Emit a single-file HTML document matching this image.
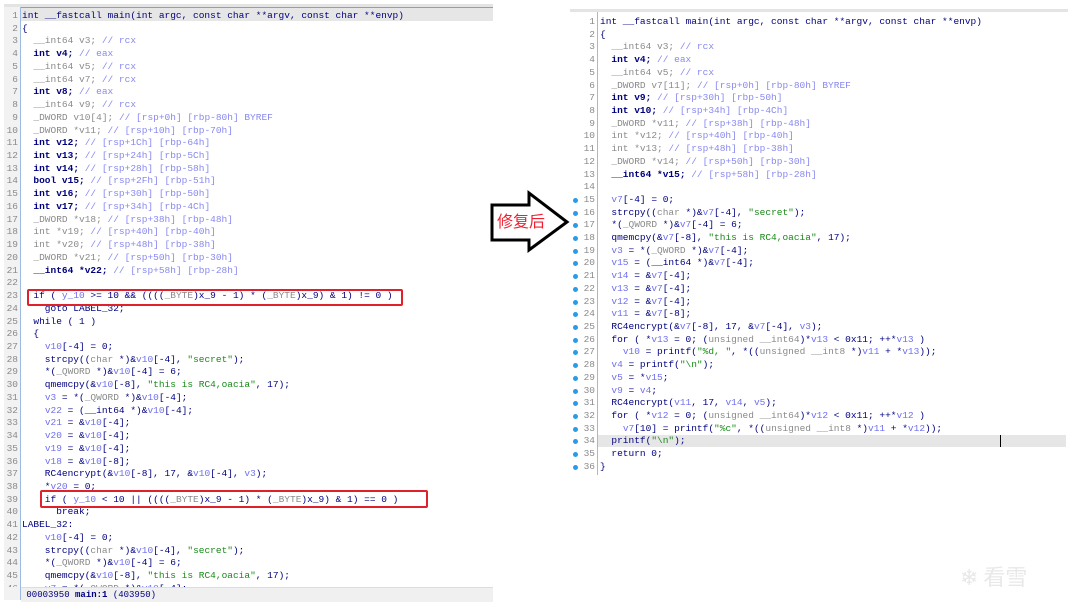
<!DOCTYPE html>
<html><head><meta charset="utf-8"><style>
body{margin:0;width:1080px;height:607px;background:#fff;position:relative;overflow:hidden;font-family:"Liberation Mono",monospace;}
.p{position:absolute;font-size:9.5px;color:#00007f;white-space:pre;}
.l{position:absolute;height:12.7px;line-height:12.7px;}
.n{position:absolute;text-align:right;color:#8a8a8a;height:12.7px;line-height:12.7px;}
.v{color:#6f6fef}.c{color:#8888f0}.g{color:#8a8a8a}.s{color:#1a8a1a}
.dot{position:absolute;width:5px;height:5px;border-radius:50%;background:#2a9be8;}
</style></head><body>

<!-- left panel -->
<div style="position:absolute;left:4px;top:4px;width:489px;height:3px;background:#e4e4e4"></div>
<div style="position:absolute;left:21px;top:7px;width:472px;height:1px;background:#6fa8e0"></div>
<div style="position:absolute;left:21px;top:8px;width:472px;height:13px;background:#e6e6e6"></div>
<div style="position:absolute;left:4px;top:7px;width:16px;height:593px;background:#f2f2f2;border-right:1px solid #9bbce0"></div>
<div class="p" id="L" style="left:0;top:10px;width:493px;height:577px;overflow:hidden">
</div>
<div style="position:absolute;left:21px;top:587px;width:472px;height:14px;background:#f0f0f0;border-top:1px solid #ddd;font-family:'Liberation Mono',monospace;font-size:9px;line-height:14px;color:#00007f;white-space:pre"> 00003950 <b>main:1</b> (403950)</div>
<div style="position:absolute;left:27px;top:289px;width:372px;height:13px;border:2px solid #e0202a;border-radius:2px"></div>
<div style="position:absolute;left:40px;top:490px;width:384px;height:14px;border:2px solid #e0202a;border-radius:2px"></div>

<!-- arrow -->
<svg style="position:absolute;left:480px;top:180px" width="100" height="80">
<path d="M12 25 H49 V13 L87 42 L49 70 V60 H12 Z" fill="#fff" stroke="#000" stroke-width="3" stroke-linejoin="miter"/>
</svg>
<div style="position:absolute;left:497px;top:211px;font-family:'Noto Sans CJK SC',sans-serif;font-size:16px;line-height:18px;color:#f02030;">修复后</div>

<!-- right panel -->
<div style="position:absolute;left:570px;top:9px;width:498px;height:3px;background:#e4e4e4"></div>
<div style="position:absolute;left:570px;top:12px;width:27px;height:463px;background:#fff;border-right:1px solid #9bbce0"></div>
<div style="position:absolute;left:598px;top:435px;width:468px;height:12px;background:#e6e6e6"></div>
<div style="position:absolute;left:1000px;top:435px;width:1px;height:12px;background:#000"></div>
<div class="p" id="R" style="left:570px;top:16px;width:498px;height:460px"></div>

<div style="position:absolute;left:960px;top:560px;font-family:'Noto Sans CJK SC',sans-serif;font-size:22px;color:#e8e8e8">❄ 看雪</div>

<script>
var L=[
'int __fastcall main(int argc, const char **argv, const char **envp)',
'{',
'  <span class="g">__int64 v3;</span> <span class="c">// rcx</span>',
'  <b>int v4;</b> <span class="c">// eax</span>',
'  <span class="g">__int64 v5;</span> <span class="c">// rcx</span>',
'  <span class="g">__int64 v7;</span> <span class="c">// rcx</span>',
'  <b>int v8;</b> <span class="c">// eax</span>',
'  <span class="g">__int64 v9;</span> <span class="c">// rcx</span>',
'  <span class="g">_DWORD v10[4];</span> <span class="c">// [rsp+0h] [rbp-80h] BYREF</span>',
'  <span class="g">_DWORD *v11;</span> <span class="c">// [rsp+10h] [rbp-70h]</span>',
'  <b>int v12;</b> <span class="c">// [rsp+1Ch] [rbp-64h]</span>',
'  <b>int v13;</b> <span class="c">// [rsp+24h] [rbp-5Ch]</span>',
'  <b>int v14;</b> <span class="c">// [rsp+28h] [rbp-58h]</span>',
'  <b>bool v15;</b> <span class="c">// [rsp+2Fh] [rbp-51h]</span>',
'  <b>int v16;</b> <span class="c">// [rsp+30h] [rbp-50h]</span>',
'  <b>int v17;</b> <span class="c">// [rsp+34h] [rbp-4Ch]</span>',
'  <span class="g">_DWORD *v18;</span> <span class="c">// [rsp+38h] [rbp-48h]</span>',
'  <span class="g">int *v19;</span> <span class="c">// [rsp+40h] [rbp-40h]</span>',
'  <span class="g">int *v20;</span> <span class="c">// [rsp+48h] [rbp-38h]</span>',
'  <span class="g">_DWORD *v21;</span> <span class="c">// [rsp+50h] [rbp-30h]</span>',
'  <b>__int64 *v22;</b> <span class="c">// [rsp+58h] [rbp-28h]</span>',
'',
'  if ( <span class="v">y_10</span> &gt;= 10 &amp;&amp; ((((<span class="g">_BYTE</span>)x_9 - 1) * (<span class="g">_BYTE</span>)x_9) &amp; 1) != 0 )',
'    goto LABEL_32;',
'  while ( 1 )',
'  {',
'    <span class="v">v10</span>[-4] = 0;',
'    strcpy((<span class="g">char</span> *)&amp;<span class="v">v10</span>[-4], <span class="s">"secret"</span>);',
'    *(<span class="g">_QWORD</span> *)&amp;<span class="v">v10</span>[-4] = 6;',
'    qmemcpy(&amp;<span class="v">v10</span>[-8], <span class="s">"this is RC4,oacia"</span>, 17);',
'    <span class="v">v3</span> = *(<span class="g">_QWORD</span> *)&amp;<span class="v">v10</span>[-4];',
'    <span class="v">v22</span> = (__int64 *)&amp;<span class="v">v10</span>[-4];',
'    <span class="v">v21</span> = &amp;<span class="v">v10</span>[-4];',
'    <span class="v">v20</span> = &amp;<span class="v">v10</span>[-4];',
'    <span class="v">v19</span> = &amp;<span class="v">v10</span>[-4];',
'    <span class="v">v18</span> = &amp;<span class="v">v10</span>[-8];',
'    RC4encrypt(&amp;<span class="v">v10</span>[-8], 17, &amp;<span class="v">v10</span>[-4], <span class="v">v3</span>);',
'    *<span class="v">v20</span> = 0;',
'    if ( <span class="v">y_10</span> &lt; 10 || ((((<span class="g">_BYTE</span>)x_9 - 1) * (<span class="g">_BYTE</span>)x_9) &amp; 1) == 0 )',
'      break;',
'LABEL_32:',
'    <span class="v">v10</span>[-4] = 0;',
'    strcpy((<span class="g">char</span> *)&amp;<span class="v">v10</span>[-4], <span class="s">"secret"</span>);',
'    *(<span class="g">_QWORD</span> *)&amp;<span class="v">v10</span>[-4] = 6;',
'    qmemcpy(&amp;<span class="v">v10</span>[-8], <span class="s">"this is RC4,oacia"</span>, 17);',
'    <span class="v">v7</span> = *(<span class="g">_QWORD</span> *)&amp;<span class="v">v10</span>[-4];'
];
var R=[
'int __fastcall main(int argc, const char **argv, const char **envp)',
'{',
'  <span class="g">__int64 v3;</span> <span class="c">// rcx</span>',
'  <b>int v4;</b> <span class="c">// eax</span>',
'  <span class="g">__int64 v5;</span> <span class="c">// rcx</span>',
'  <span class="g">_DWORD v7[11];</span> <span class="c">// [rsp+0h] [rbp-80h] BYREF</span>',
'  <b>int v9;</b> <span class="c">// [rsp+30h] [rbp-50h]</span>',
'  <b>int v10;</b> <span class="c">// [rsp+34h] [rbp-4Ch]</span>',
'  <span class="g">_DWORD *v11;</span> <span class="c">// [rsp+38h] [rbp-48h]</span>',
'  <span class="g">int *v12;</span> <span class="c">// [rsp+40h] [rbp-40h]</span>',
'  <span class="g">int *v13;</span> <span class="c">// [rsp+48h] [rbp-38h]</span>',
'  <span class="g">_DWORD *v14;</span> <span class="c">// [rsp+50h] [rbp-30h]</span>',
'  <b>__int64 *v15;</b> <span class="c">// [rsp+58h] [rbp-28h]</span>',
'',
'  <span class="v">v7</span>[-4] = 0;',
'  strcpy((<span class="g">char</span> *)&amp;<span class="v">v7</span>[-4], <span class="s">"secret"</span>);',
'  *(<span class="g">_QWORD</span> *)&amp;<span class="v">v7</span>[-4] = 6;',
'  qmemcpy(&amp;<span class="v">v7</span>[-8], <span class="s">"this is RC4,oacia"</span>, 17);',
'  <span class="v">v3</span> = *(<span class="g">_QWORD</span> *)&amp;<span class="v">v7</span>[-4];',
'  <span class="v">v15</span> = (__int64 *)&amp;<span class="v">v7</span>[-4];',
'  <span class="v">v14</span> = &amp;<span class="v">v7</span>[-4];',
'  <span class="v">v13</span> = &amp;<span class="v">v7</span>[-4];',
'  <span class="v">v12</span> = &amp;<span class="v">v7</span>[-4];',
'  <span class="v">v11</span> = &amp;<span class="v">v7</span>[-8];',
'  RC4encrypt(&amp;<span class="v">v7</span>[-8], 17, &amp;<span class="v">v7</span>[-4], <span class="v">v3</span>);',
'  for ( *<span class="v">v13</span> = 0; (<span class="g">unsigned __int64</span>)*<span class="v">v13</span> &lt; 0x11; ++*<span class="v">v13</span> )',
'    <span class="v">v10</span> = printf(<span class="s">"%d, "</span>, *((<span class="g">unsigned __int8</span> *)<span class="v">v11</span> + *<span class="v">v13</span>));',
'  <span class="v">v4</span> = printf(<span class="s">"\\n"</span>);',
'  <span class="v">v5</span> = *<span class="v">v15</span>;',
'  <span class="v">v9</span> = <span class="v">v4</span>;',
'  RC4encrypt(<span class="v">v11</span>, 17, <span class="v">v14</span>, <span class="v">v5</span>);',
'  for ( *<span class="v">v12</span> = 0; (<span class="g">unsigned __int64</span>)*<span class="v">v12</span> &lt; 0x11; ++*<span class="v">v12</span> )',
'    <span class="v">v7</span>[10] = printf(<span class="s">"%c"</span>, *((<span class="g">unsigned __int8</span> *)<span class="v">v11</span> + *<span class="v">v12</span>));',
'  printf(<span class="s">"\\n"</span>);',
'  return 0;',
'}'
];
function build(id,arr,lh,codeX,numR,dots){
 var el=document.getElementById(id),h='';
 for(var i=0;i<arr.length;i++){
  var t=(i*lh).toFixed(2);
  h+='<div class="n" style="top:'+t+'px;left:0;width:'+numR+'px">'+(i+1)+'</div>';
  h+='<div class="l" style="top:'+t+'px;left:'+codeX+'px">'+arr[i]+'</div>';
  if(dots&&i>=14) h+='<div class="dot" style="top:'+(+t+4)+'px;left:3px"></div>';
 }
 el.innerHTML=h;
}
build('L',L,12.73,22,18,false);
build('R',R,12.71,30,25,true);
</script>
</body></html>
